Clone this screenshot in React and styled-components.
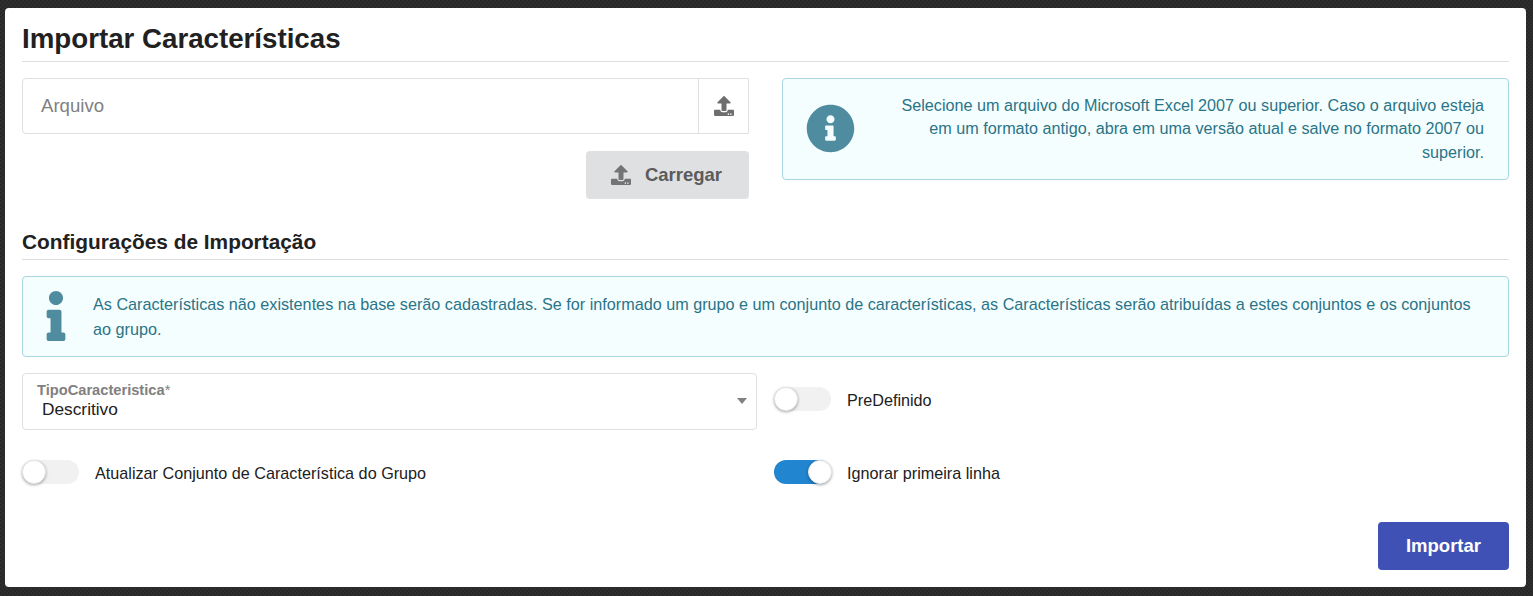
import React from "react";
import styled, { createGlobalStyle } from "styled-components";
import { FaUpload, FaInfoCircle, FaInfo } from "react-icons/fa";

const GlobalStyle = createGlobalStyle`
  html, body {
    margin: 0;
    padding: 0;
    height: 596px;
    overflow: hidden;
    background: repeating-conic-gradient(#2f2f2f 0 25%, #272727 0 50%) 0 0 / 4px 4px;
    font-family: "Liberation Sans", Arial, sans-serif;
  }
`;

const Panel = styled.div`
  box-sizing: border-box;
  width: 1521px;
  height: 579px;
  margin: 8px 0 0 5px;
  padding: 14px 17px 0;
  background: #fff;
  border-radius: 4px;
`;

const Title = styled.h1`
  margin: 0 0 16px;
  height: 39px;
  line-height: 34px;
  font-size: 27.7px;
  font-weight: 700;
  color: #212121;
  border-bottom: 1px solid #dedede;
`;

const TopRow = styled.div`
  display: grid;
  grid-template-columns: 727px 727px;
  column-gap: 33px;
  height: 153px;
`;

const UploadColumn = styled.div`
  display: flex;
  flex-direction: column;
  align-items: flex-end;
  gap: 17px;
`;

const FileField = styled.div`
  box-sizing: border-box;
  display: flex;
  width: 100%;
  height: 56px;
  border: 1px solid #e0e0e0;
  border-radius: 4px 0 0 4px;
`;

const FilePlaceholder = styled.div`
  flex: 1;
  padding-left: 18px;
  line-height: 54px;
  font-size: 18.6px;
  color: #808080;
`;

const FileButton = styled.div`
  width: 49px;
  display: flex;
  align-items: center;
  justify-content: center;
  border-left: 1px solid #e0e0e0;
  color: #6e6e6e;
  font-size: 20px;
`;

const ActionButton = styled.div`
  box-sizing: border-box;
  display: flex;
  align-items: center;
  justify-content: center;
  gap: ${(p) => (p.$primary ? "0" : "14px")};
  height: 48px;
  width: ${(p) => (p.$primary ? "131px" : "163px")};
  padding-right: ${(p) => (p.$primary ? "0" : "2px")};
  border-radius: 4px;
  font-size: 18.5px;
  font-weight: 700;
  background: ${(p) => (p.$primary ? "#3f51b5" : "#dfe0e2")};
  color: ${(p) => (p.$primary ? "#fff" : "#5b5b5b")};
  svg {
    color: #747474;
    font-size: 20px;
  }
`;

const InfoBox = styled.div`
  box-sizing: border-box;
  display: flex;
  align-items: center;
  border: 1px solid #a8d6e0;
  border-radius: 4px;
  background: #f5fefe;
  color: #2a7488;
`;

const TopInfo = styled(InfoBox)`
  height: 102px;
  padding: 0 24px 0 23px;
  gap: 46px;
  text-align: right;
  font-size: 16.18px;
  line-height: 23.5px;
  svg {
    flex: none;
    color: #508ca0;
    font-size: 49px;
    margin-top: -2px;
  }
`;

const WideInfo = styled(InfoBox)`
  height: 81px;
  padding: 0 24px 0 8px;
  gap: 12px;
  font-size: 16.2px;
  line-height: 25px;
  svg {
    flex: none;
    color: #508ca0;
    font-size: 50px;
    margin-top: -1px;
  }
`;

const InfoText = styled.div`
  flex: 1;
`;

const SectionTitle = styled.h2`
  box-sizing: border-box;
  margin: 0 0 16px;
  height: 29px;
  line-height: 22px;
  font-size: 20.85px;
  font-weight: 700;
  color: #212121;
  border-bottom: 1px solid #dedede;
`;

const OptionsGrid = styled.div`
  display: grid;
  grid-template-columns: 735px 1fr;
  grid-template-rows: 57px 24px;
  column-gap: 17px;
  row-gap: 30px;
  margin-top: 16px;
`;

const SelectBox = styled.div`
  box-sizing: border-box;
  position: relative;
  height: 57px;
  padding: 8px 14px 0;
  border: 1px solid #e0e0e0;
  border-radius: 4px;
`;

const SelectLabel = styled.div`
  font-size: 14.66px;
  line-height: 16px;
  font-weight: 700;
  color: #808080;
  span {
    font-weight: 400;
  }
`;

const SelectValue = styled.div`
  padding-left: 5px;
  margin-top: 1px;
  font-size: 17.3px;
  line-height: 20px;
  color: #212121;
`;

const Caret = styled.div`
  position: absolute;
  top: 24px;
  right: 9px;
  width: 0;
  height: 0;
  border-left: 5px solid transparent;
  border-right: 5px solid transparent;
  border-top: 6px solid #808080;
`;

const ToggleRow = styled.div`
  display: flex;
  align-items: center;
  gap: 16px;
  font-size: 16.2px;
  color: #212121;
  height: 24px;
  margin-top: ${(p) => (p.$raised ? "14px" : "0")};
`;

const ToggleLabel = styled.span`
  padding-top: 2px;
`;

const Track = styled.div`
  position: relative;
  width: 57px;
  height: 24px;
  border-radius: 12px;
  background: ${(p) => (p.$on ? "#2185d0" : "#f1f1f1")};
`;

const Knob = styled.div`
  box-sizing: border-box;
  position: absolute;
  top: 0;
  left: ${(p) => (p.$on ? "34px" : "0")};
  width: 24px;
  height: 24px;
  border-radius: 50%;
  background: #fff;
  border: 1px solid #e6e6e6;
  box-shadow: 0 1px 3px rgba(0, 0, 0, 0.35);
`;

const Footer = styled.div`
  display: flex;
  justify-content: flex-end;
  margin-top: 38px;
`;

function Toggle({ on, label, raised }) {
  return (
    <ToggleRow $raised={raised}>
      <Track $on={on}>
        <Knob $on={on} />
      </Track>
      <ToggleLabel>{label}</ToggleLabel>
    </ToggleRow>
  );
}

export default function App() {
  return (
    <>
      <GlobalStyle />
      <Panel>
        <Title>Importar Características</Title>
        <TopRow>
          <UploadColumn>
            <FileField>
              <FilePlaceholder>Arquivo</FilePlaceholder>
              <FileButton>
                <FaUpload />
              </FileButton>
            </FileField>
            <ActionButton>
              <FaUpload />
              Carregar
            </ActionButton>
          </UploadColumn>
          <TopInfo>
            <FaInfoCircle />
            <InfoText>
              Selecione um arquivo do Microsoft Excel 2007 ou superior. Caso o arquivo esteja em um formato antigo, abra em uma versão atual e salve no formato 2007 ou superior.
            </InfoText>
          </TopInfo>
        </TopRow>
        <SectionTitle>Configurações de Importação</SectionTitle>
        <WideInfo>
          <FaInfo />
          <InfoText>
            As Características não existentes na base serão cadastradas. Se for informado um grupo e um conjunto de características, as Características serão atribuídas a estes conjuntos e os conjuntos ao grupo.
          </InfoText>
        </WideInfo>
        <OptionsGrid>
          <SelectBox>
            <SelectLabel>
              TipoCaracteristica<span>*</span>
            </SelectLabel>
            <SelectValue>Descritivo</SelectValue>
            <Caret />
          </SelectBox>
          <Toggle label="PreDefinido" raised />
          <Toggle label="Atualizar Conjunto de Característica do Grupo" />
          <Toggle label="Ignorar primeira linha" on />
        </OptionsGrid>
        <Footer>
          <ActionButton $primary>Importar</ActionButton>
        </Footer>
      </Panel>
    </>
  );
}
